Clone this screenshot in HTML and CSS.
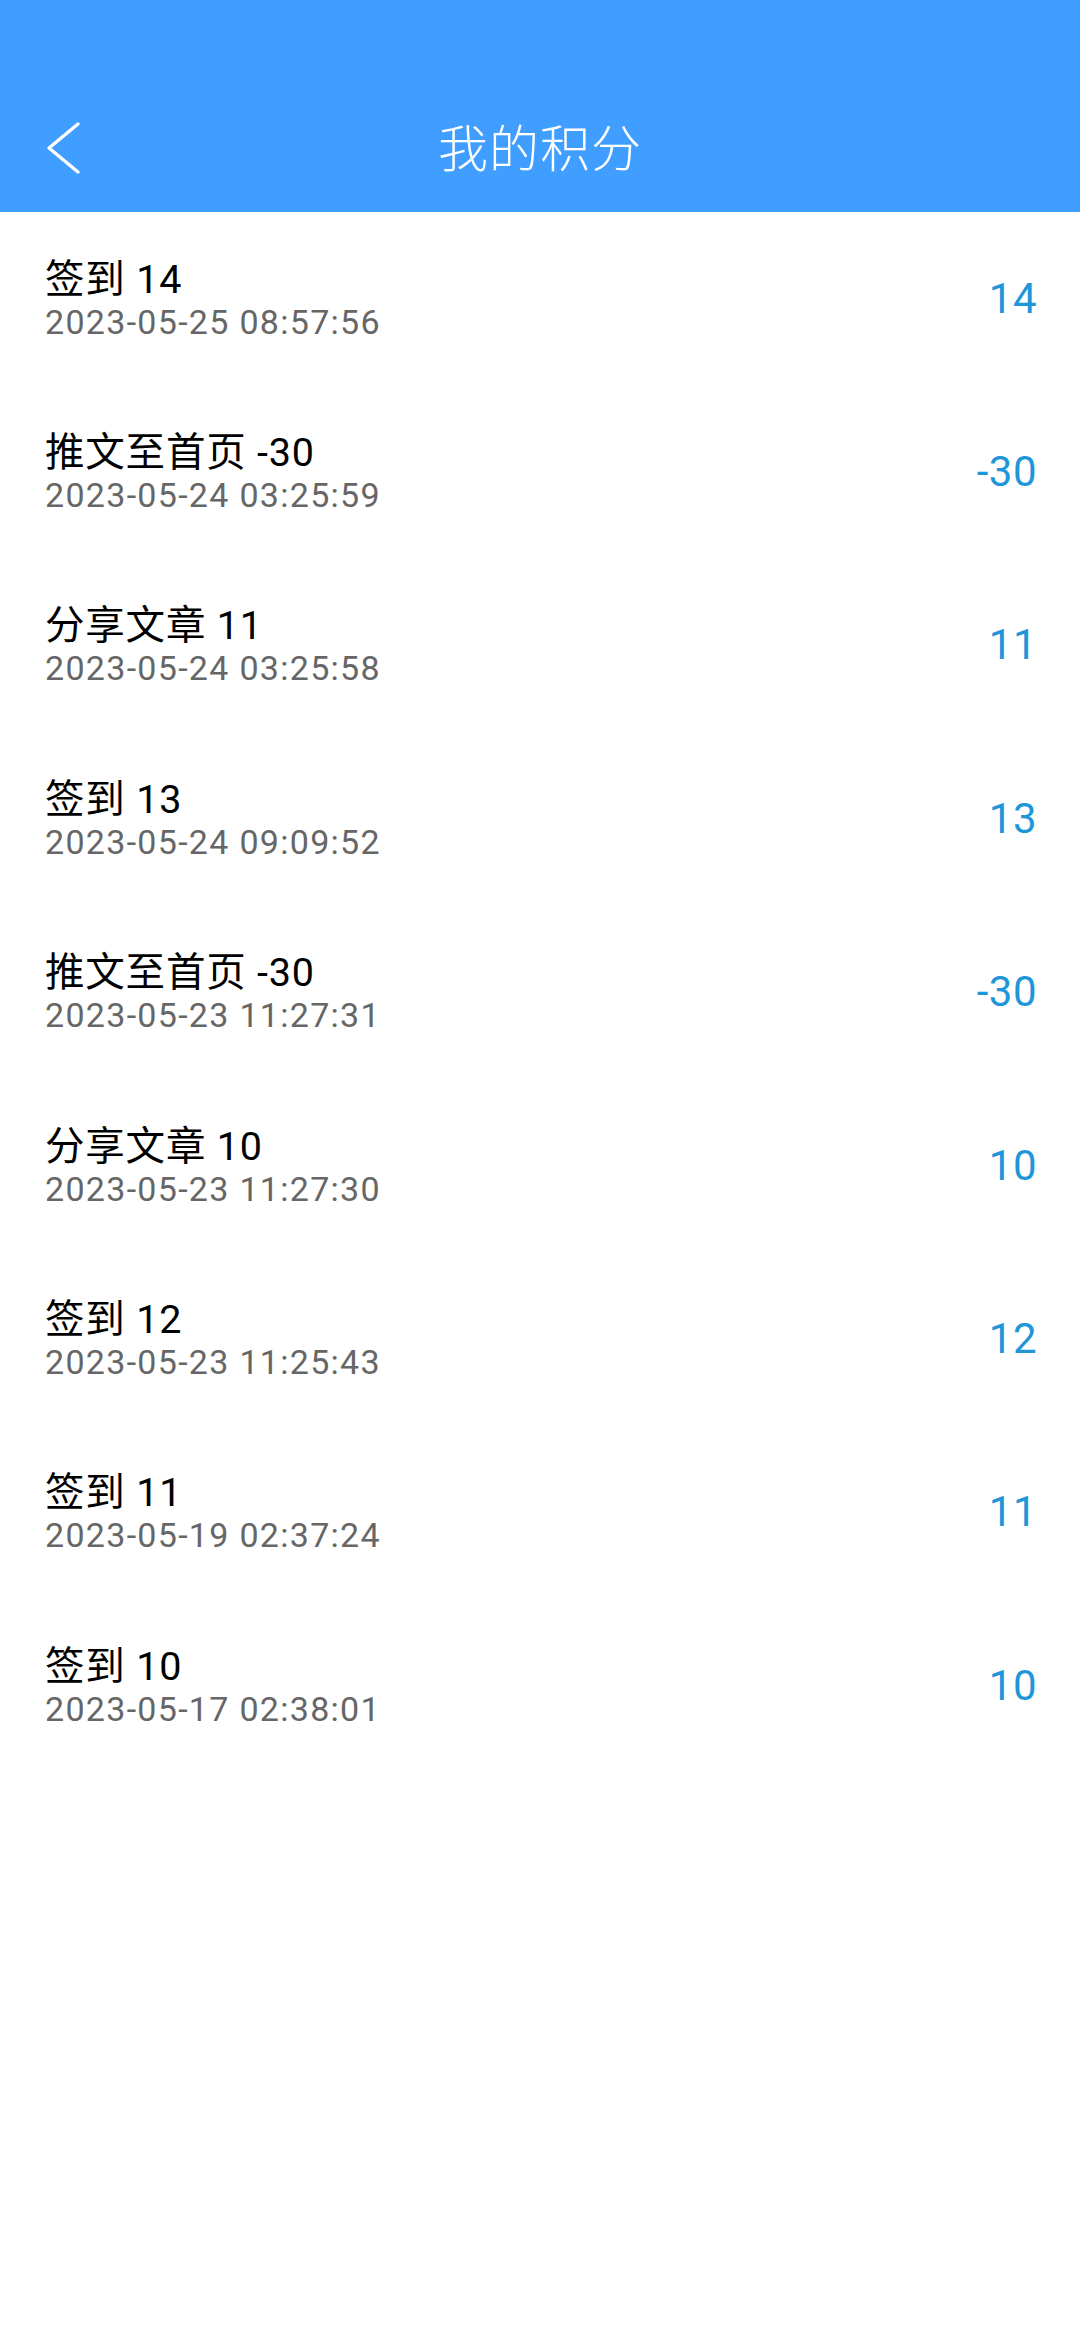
FILE: index.html
```html
<!DOCTYPE html>
<html lang="zh-CN">
<head>
<meta charset="utf-8">
<title>我的积分</title>
<link rel="stylesheet" href="styles.css">
</head>
<body>
<header class="appbar">
  <div class="bar">
    <svg class="back" width="40" height="56" viewBox="0 0 40 56"><polyline points="34,4 5,28 34,52" fill="none" stroke="#fff" stroke-width="3.4" stroke-linecap="round" stroke-linejoin="round"/></svg>
    <h1 class="title">我的积分</h1>
  </div>
</header>
<ul class="list">
  <li class="row"><div class="info"><div class="name">签到 14</div><div class="time">2023-05-25 08:57:56</div></div><div class="pts">14</div></li>
  <li class="row"><div class="info"><div class="name">推文至首页 -30</div><div class="time">2023-05-24 03:25:59</div></div><div class="pts">-30</div></li>
  <li class="row"><div class="info"><div class="name">分享文章 11</div><div class="time">2023-05-24 03:25:58</div></div><div class="pts">11</div></li>
  <li class="row"><div class="info"><div class="name">签到 13</div><div class="time">2023-05-24 09:09:52</div></div><div class="pts">13</div></li>
  <li class="row"><div class="info"><div class="name">推文至首页 -30</div><div class="time">2023-05-23 11:27:31</div></div><div class="pts">-30</div></li>
  <li class="row"><div class="info"><div class="name">分享文章 10</div><div class="time">2023-05-23 11:27:30</div></div><div class="pts">10</div></li>
  <li class="row"><div class="info"><div class="name">签到 12</div><div class="time">2023-05-23 11:25:43</div></div><div class="pts">12</div></li>
  <li class="row"><div class="info"><div class="name">签到 11</div><div class="time">2023-05-19 02:37:24</div></div><div class="pts">11</div></li>
  <li class="row"><div class="info"><div class="name">签到 10</div><div class="time">2023-05-17 02:38:01</div></div><div class="pts">10</div></li>
</ul>
</body>
</html>
```
FILE: styles.css
```css
* { box-sizing: border-box; }
html, body { margin: 0; padding: 0; background: #fff; }
body {
  width: 1080px;
  min-height: 2340px;
  font-family: "Roboto", "Noto Sans CJK SC", sans-serif;
}
.appbar {
  background: #3f9eff;
  height: 212px;
  padding-top: 78px;
}
.bar {
  position: relative;
  height: 134px;
  display: flex;
  align-items: flex-start;
  justify-content: center;
}
.back {
  position: absolute;
  left: 44px;
  top: 42px;
}
.title {
  margin: 0;
  margin-top: 36px;
  font-family: "Noto Sans CJK SC", sans-serif;
  font-weight: 300;
  font-size: 50px;
  line-height: 62px;
  color: #fff;
  letter-spacing: 1px;
}
.list {
  list-style: none;
  margin: 0;
  padding: 0;
}
.row {
  height: 173.375px;
  display: flex;
  align-items: center;
  justify-content: space-between;
  padding: 0 43px 0 45px;
}
.info {
  display: flex;
  flex-direction: column;
}
.name {
  font-size: 39.5px;
  line-height: 46px;
  color: #000;
  letter-spacing: 0.8px;
}
.time {
  font-size: 34px;
  line-height: 38px;
  color: #666;
  letter-spacing: 1.3px;
}
.pts {
  font-size: 42px;
  line-height: 50px;
  color: #1e96d8;
  font-weight: 400;
  letter-spacing: 0.5px;
}
```
